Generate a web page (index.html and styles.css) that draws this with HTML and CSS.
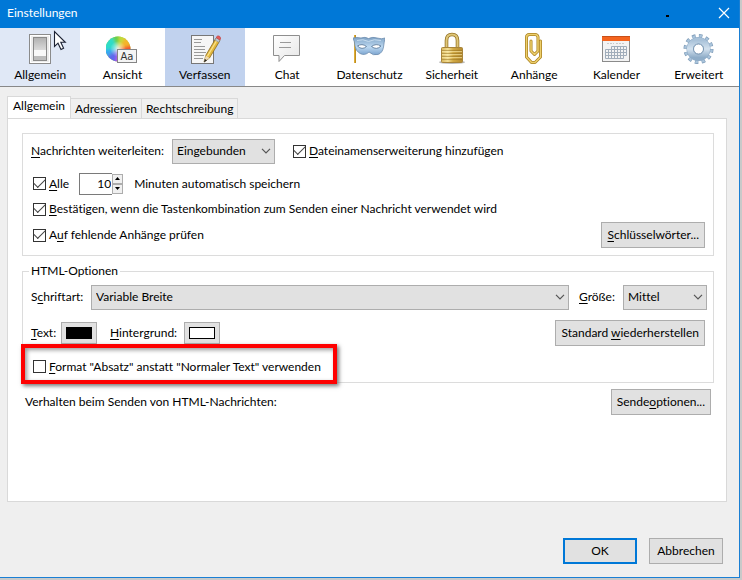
FILE: index.html
```html
<!DOCTYPE html>
<html lang="de">
<head>
<meta charset="utf-8">
<meta name="viewport" content="width=device-width, initial-scale=1">
<title>Einstellungen</title>
<link rel="stylesheet" href="styles.css">
</head>
<body>
<div class="window">
  <header class="titlebar">
    <h1 class="title">Einstellungen</h1>
    <span class="speck"></span>
    <button class="close" type="button" aria-label="Schließen">
      <svg width="12" height="12" viewBox="0 0 12 12"><path d="M1 1L11 11M11 1L1 11" stroke="#fff" stroke-width="1.2"/></svg>
    </button>
  </header>

  <nav class="toolbar">
    <button class="pane hover" type="button">
      <svg class="icon" viewBox="0 0 32 32">
        <defs>
          <linearGradient id="sw" x1="0" y1="0" x2="0" y2="1"><stop offset="0" stop-color="#b0b0b0"/><stop offset=".65" stop-color="#e2e2e2"/><stop offset="1" stop-color="#b4b4b4"/></linearGradient>
        </defs>
        <rect x="5.500" y="2.500" width="21" height="29" fill="#ececec" stroke="#8b8b8b"/>
        <rect x="6.500" y="3.500" width="19" height="27" fill="none" stroke="#fff"/>
        <rect x="9.500" y="5.500" width="13" height="23" fill="url(#sw)" stroke="#8a8a8a"/>
        <rect x="10" y="18" width="12" height="6" fill="#f8f8f8"/>
        <path d="M10 24h12v4H10z" fill="#bcbcbc"/>
      </svg>
      <span>Allgemein</span>
      <svg class="pointer" width="14" height="21" viewBox="0 0 14 21"><path d="M1.500 1.500V16.500L5 13.200L8 19.500L10.600 18.300L7.800 12.300H12.300Z" fill="#fff" stroke="#1c2233" stroke-width="1.100"/></svg>
    </button>
    <button class="pane" type="button">
      <svg class="icon" viewBox="0 0 32 32">
        <defs>
          <radialGradient id="hl"><stop offset="0" stop-color="#fff" stop-opacity=".75"/><stop offset="1" stop-color="#fff" stop-opacity="0"/></radialGradient>
          <filter id="sf" x="-20%" y="-20%" width="140%" height="140%"><feGaussianBlur stdDeviation="1.500"/></filter>
          <clipPath id="disc"><circle cx="12" cy="17" r="12.500"/></clipPath>
        </defs>
        <g clip-path="url(#disc)">
          <rect x="-1" y="4" width="26" height="26" fill="#a6d84a"/>
          <g filter="url(#sf)">
            <path d="M12 17L4 0H15Z" fill="#63cf4b"/>
            <path d="M12 17L13 0H24Z" fill="#c5d93a"/>
            <path d="M12 17L22 2L30 14Z" fill="#f4b42b"/>
            <path d="M12 17L30 12V26Z" fill="#f0512e"/>
            <path d="M12 17L28 24L18 34Z" fill="#ee3f8e"/>
            <path d="M12 17L19 34H8Z" fill="#c94fe6"/>
            <path d="M12 17L9 34L-4 28Z" fill="#5d68ee"/>
            <path d="M12 17L-4 28V16Z" fill="#39a5f3"/>
            <path d="M12 17L-4 18V4H6Z" fill="#2fdcc8"/>
          </g>
          <circle cx="12" cy="17" r="8" fill="url(#hl)"/>
        </g>
        <rect x="11.500" y="17.500" width="19" height="13" fill="#f4f4f4" stroke="#858585"/>
        <text x="21" y="28" class="sample" text-anchor="middle">Aa</text>
      </svg>
      <span>Ansicht</span>
    </button>
    <button class="pane selected" type="button">
      <svg class="icon" viewBox="0 0 32 32">
        <rect x="2.500" y="3.500" width="22" height="28" fill="#f6f6f6" stroke="#777"/>
        <path d="M5 7.500h8M5 10.500h7M5 14.500h11M5 17.500h11M5 20.500h12M5 23.500h10M5 26.500h9" stroke="#999"/>
        <path d="M15 30L17 23L27 6L31 8.500L20.500 26Z" fill="#e3b83c" stroke="#8a681c" stroke-width=".8"/>
        <path d="M18.500 24L28 8" stroke="#fae28a" stroke-width="1.300"/>
        <path d="M15 30L16.800 23.500L20.500 26Z" fill="#eed9af"/>
        <path d="M15 30.500L15.800 27L18 28.300Z" fill="#222"/>
        <path d="M26 8L27.200 5.800L31 8L29.700 10.300Z" fill="#bfc6cf" stroke="#7c848f" stroke-width=".5"/>
        <path d="M27 5.500Q28.500 3 30.500 4.200Q32.500 5.700 31 8Z" fill="#e65a5a" stroke="#b84343" stroke-width=".6"/>
      </svg>
      <span>Verfassen</span>
    </button>
    <button class="pane" type="button">
      <svg class="icon" viewBox="0 0 32 32">
        <defs><linearGradient id="bub" x1="0" y1="0" x2="1" y2="1"><stop offset="0" stop-color="#fff"/><stop offset="1" stop-color="#e6e6e6"/></linearGradient></defs>
        <path d="M2.500 3.500H28.500V23.500H13.500L8 29.500V23.500H2.500Z" fill="url(#bub)" stroke="#8e8e8e"/>
        <path d="M9 10.500h11M8 15.500h12" stroke="#9a9a9a"/>
      </svg>
      <span>Chat</span>
    </button>
    <button class="pane" type="button">
      <svg class="icon" viewBox="0 0 32 32">
        <defs><linearGradient id="mk" x1="0" y1="0" x2="0" y2="1"><stop offset="0" stop-color="#7fa3c6"/><stop offset=".55" stop-color="#bcd8f1"/><stop offset="1" stop-color="#7ba4cf"/></linearGradient></defs>
        <path d="M2 3V31" stroke="#b88718" stroke-width="2"/>
        <path d="M1.700 3V31" stroke="#f0c04b" stroke-width=".8"/>
        <path d="M0 6Q4 5 8 6Q12 4.500 15.500 6.500Q20 4.500 24 6Q29 7.500 32 6Q31 11 30.500 15Q29.500 21 25 22.500Q20 24 16 20Q12 24 7 21.500Q2.500 19 2 14Q1.500 9 0 6Z" fill="url(#mk)" stroke="#6d8daf" stroke-width=".8"/>
        <path d="M4.500 14Q9 11 13.500 14.500Q9 18.500 4.500 14ZM18.500 14.500Q23 11 28 14Q23.500 18.500 18.500 14.500Z" fill="#fff" stroke="#5c7c9c" stroke-width=".9"/>
        <path d="M4 8.500Q10 6.500 15.500 9.500Q21 6.500 28 8.500" fill="none" stroke="#c8ddef"/>
      </svg>
      <span>Datenschutz</span>
    </button>
    <button class="pane" type="button">
      <svg class="icon" viewBox="0 0 32 32">
        <defs>
          <linearGradient id="lk" x1="0" x2="1"><stop offset="0" stop-color="#d8b65c"/><stop offset=".3" stop-color="#f3de94"/><stop offset=".55" stop-color="#d2aa45"/><stop offset="1" stop-color="#b48a30"/></linearGradient>
        </defs>
        <ellipse cx="16" cy="30.300" rx="13" ry="1.700" fill="#bbb"/>
        <path d="M10.500 16V8.500Q10.500 2.500 16 2.500Q21.500 2.500 21.500 8.500V16" fill="none" stroke="#967426" stroke-width="3.600"/>
        <path d="M10.500 16V8.500Q10.500 2.500 16 2.500Q21.500 2.500 21.500 8.500V16" fill="none" stroke="#dfc678" stroke-width="2"/>
        <rect x="5.500" y="15.500" width="21" height="15" rx="1" fill="url(#lk)" stroke="#a8853a"/>
        <path d="M6 18.500h20M6 21.500h20M6 24.500h20M6 27.500h20" stroke="#94701f" stroke-opacity=".5"/>
        <path d="M6 19.500h20M6 22.500h20M6 25.500h20" stroke="#fff0b4" stroke-opacity=".55"/>
      </svg>
      <span>Sicherheit</span>
    </button>
    <button class="pane" type="button">
      <svg class="icon" viewBox="0 0 32 32">
        <path d="M13 9V19L16.500 22.500L20 19V5Q19.500 2.500 17 2.500H11.500Q8.500 2.500 8.500 5.500V25L13.500 30.500H17L22.500 25V9" fill="none" stroke="#a98120" stroke-width="3" stroke-linejoin="round" stroke-linecap="round"/>
        <path d="M13 9V19L16.500 22.500L20 19V5Q19.500 2.500 17 2.500H11.500Q8.500 2.500 8.500 5.500V25L13.500 30.500H17L22.500 25V9" fill="none" stroke="#edcf6c" stroke-width="1.500" stroke-linejoin="round" stroke-linecap="round"/>
      </svg>
      <span>Anhänge</span>
    </button>
    <button class="pane" type="button">
      <svg class="icon" viewBox="0 0 32 32">
        <rect x="2.500" y="4.500" width="27" height="25" fill="#f3f3f3" stroke="#8b8b8b"/>
        <rect x="2" y="4" width="28" height="5" fill="#f4641e"/>
        <path d="M2 4.500h28" stroke="#c84f18"/>
        <path d="M7 11.500h7M16 11.500h9" stroke="#c9c9c9" stroke-dasharray="2 1"/>
        <path d="M11.500 14.500h15v9h-3v3h-18v-9h6zM5.500 20.500h21M5.500 23.500h18M11.500 17.500h15M8.500 17.500v9M11.500 17.500v9M14.500 14.500v12M17.500 14.500v12M20.500 14.500v12M23.500 14.500v9" fill="none" stroke="#a1adba"/>
      </svg>
      <span>Kalender</span>
    </button>
    <button class="pane" type="button">
      <svg class="icon" viewBox="0 0 32 32">
        <defs><linearGradient id="gr" x1="0" y1="0" x2="0" y2="1"><stop offset="0" stop-color="#a9c2d9"/><stop offset=".5" stop-color="#d2e1ee"/><stop offset="1" stop-color="#8fadc8"/></linearGradient></defs>
        <circle cx="15.500" cy="17" r="13" fill="none" stroke="#7f9cb8" stroke-width="4" stroke-dasharray="3.500 3.307"/>
        <circle cx="15.500" cy="17" r="12.800" fill="none" stroke="#a9c4dc" stroke-width="3" stroke-dasharray="2.500 4.202" stroke-dashoffset="-.5"/>
        <circle cx="15.500" cy="17" r="8.500" fill="none" stroke="#8fabc6" stroke-width="7"/>
        <circle cx="15.500" cy="17" r="8.500" fill="none" stroke="url(#gr)" stroke-width="6"/>
        <circle cx="15.500" cy="17" r="5" fill="#fff" stroke="#7795b2"/>
      </svg>
      <span>Erweitert</span>
    </button>
  </nav>

  <main class="content">
    <div class="tabs" role="tablist">
      <button class="tab active" type="button" role="tab" aria-selected="true">Allgemein</button>
      <button class="tab" type="button" role="tab">Adressieren</button>
      <button class="tab" type="button" role="tab">Rechtschreibung</button>
    </div>

    <form class="panel">
      <section class="group general">
        <div class="row forward">
          <label class="forward-label" for="forward"><u>N</u>achrichten weiterleiten:</label>
          <span class="select mode">
            <select id="forward"><option>Eingebunden</option></select>
            <svg width="10" height="6" viewBox="0 0 10 6"><path d="M1 .8L5 4.800L9 .8" fill="none" stroke="#555" stroke-width="1.200"/></svg>
          </span>
          <label class="check"><input type="checkbox" checked><span><u>D</u>ateinamenserweiterung hinzufügen</span></label>
        </div>
        <div class="row autosave">
          <label class="check"><input type="checkbox" checked><span><u>A</u>lle</span></label>
          <span class="spinner">
            <input type="text" value="10" aria-label="Minuten">
            <span class="steps">
              <button type="button" aria-label="Mehr"><svg width="5" height="3" viewBox="0 0 5 3"><path d="M0 3L2.500 0L5 3Z"/></svg></button>
              <button type="button" aria-label="Weniger"><svg width="5" height="3" viewBox="0 0 5 3"><path d="M0 0L2.500 3L5 0Z"/></svg></button>
            </span>
          </span>
          <span>Minuten automatisch speichern</span>
        </div>
        <div class="row confirm">
          <label class="check"><input type="checkbox" checked><span><u>B</u>estätigen, wenn die Tastenkombination zum Senden einer Nachricht verwendet wird</span></label>
        </div>
        <div class="row attach">
          <label class="check"><input type="checkbox" checked><span>A<u>u</u>f fehlende Anhänge prüfen</span></label>
          <button class="button end" type="button"><u>S</u>chlüsselwörter...</button>
        </div>
      </section>

      <fieldset class="group html">
        <legend>HTML-Optionen</legend>
        <div class="row fonts">
          <label class="font-label" for="font">S<u>c</u>hriftart:</label>
          <span class="select font">
            <select id="font"><option>Variable Breite</option></select>
            <svg width="10" height="6" viewBox="0 0 10 6"><path d="M1 .8L5 4.800L9 .8" fill="none" stroke="#555" stroke-width="1.200"/></svg>
          </span>
          <label class="size-label" for="size"><u>G</u>röße:</label>
          <span class="select size">
            <select id="size"><option>Mittel</option></select>
            <svg width="10" height="6" viewBox="0 0 10 6"><path d="M1 .8L5 4.800L9 .8" fill="none" stroke="#555" stroke-width="1.200"/></svg>
          </span>
        </div>
        <div class="row colors">
          <label class="text-label" for="fg"><u>T</u>ext:</label>
          <button class="color" id="fg" type="button"><span class="swatch black"></span></button>
          <label class="back-label" for="bg"><u>H</u>intergrund:</label>
          <button class="color" id="bg" type="button"><span class="swatch white"></span></button>
          <button class="button end" type="button">Standard <u>w</u>iederherstellen</button>
        </div>
        <div class="row format">
          <label class="check marked"><input type="checkbox"><span><u>F</u>ormat "Absatz" anstatt "Normaler Text" verwenden</span></label>
        </div>
      </fieldset>

      <div class="row sending">
        <span>Verhalten beim Senden von HTML-Nachrichten:</span>
        <button class="button end" type="button">Sende<u>o</u>ptionen...</button>
      </div>
    </form>
  </main>

  <footer class="actions">
    <button class="button default" type="button">OK</button>
    <button class="button" type="button">Abbrechen</button>
  </footer>
</div>
</body>
</html>
```
FILE: styles.css
```css
* {
  box-sizing: border-box;
}

body {
  margin: 0;
  padding: 0 2px 2px 0;
  background: #c9c9c9;
  color: #000;
  font: 12px/16px Lato, "Open Sans", sans-serif;
  font-variant-ligatures: none;
}

button, input, select {
  margin: 0;
  font: inherit;
  font-variant-ligatures: none;
  color: inherit;
}

u {
  text-underline-offset: 2px;
}

.window {
  display: flex;
  flex-direction: column;
  min-height: calc(100vh - 2px);
  background: #efefef;
  border: solid #1a7fd4;
  border-width: 0 1px 1px 0;
}

.titlebar {
  display: flex;
  align-items: center;
  height: 28px;
  padding: 0 9px 2px 7px;
  background: #0078d7;
  color: #fff;
}

.title {
  flex: 1;
  margin: 0;
  font-size: 12px;
  font-weight: 400;
}

.speck {
  width: 3px;
  height: 2px;
  margin: 6px 49px 0 0;
  background: #000;
}

.close {
  display: flex;
  padding: 0;
  border: 0;
  background: none;
}

.toolbar {
  display: grid;
  grid-template-columns: repeat(9, 1fr);
  column-gap: 2px;
  background: #fff;
  border-bottom: 1px solid #888;
}

.pane {
  position: relative;
  display: flex;
  flex-direction: column;
  align-items: center;
  gap: 3px;
  height: 58px;
  padding: 4px 0 0;
  border: 0;
  background: none;
}

.pane.hover {
  background: #e0e8f6;
}

.pane.selected {
  background: #c1d2ee;
}

.icon {
  width: 32px;
  height: 32px;
}

.sample {
  font: 10px "DejaVu Sans", sans-serif;
  fill: #333;
}

.pointer {
  position: absolute;
  top: 2px;
  left: 53px;
}

.content {
  flex: 1;
  display: flex;
  flex-direction: column;
  padding: 9px 12px 0 7px;
}

.tabs {
  display: flex;
  align-items: flex-end;
}

.tab {
  height: 20px;
  padding: 0 4px;
  border: 1px solid #d9d9d9;
  border-width: 1px 1px 0 0;
  background: #f0f0f0;
}

.tab.active {
  height: 23px;
  margin-bottom: -1px;
  padding: 0 5px 4px;
  border-left-width: 1px;
  background: #fff;
}

.panel {
  flex: 1;
  padding: 14px 12px 0 14px;
  border: 1px solid #d9d9d9;
  background: #fff;
}

.group {
  margin: 0;
  border: 1px solid #dcdcdc;
}

.row {
  display: flex;
  align-items: center;
}

.general {
  padding: 4px 8px 0;
}

.forward {
  height: 26px;
}

.forward-label {
  width: 141px;
}

.forward .check {
  margin-left: 18px;
}

.autosave {
  height: 39px;
}

.confirm {
  height: 12px;
}

.attach {
  height: 40px;
}

.check {
  display: flex;
  align-items: center;
  gap: 3px;
  margin-left: 2px;
}

.check input {
  display: grid;
  place-items: center;
  width: 13px;
  height: 13px;
  appearance: none;
  border: 1px solid #333;
  background: #fff;
}

.check input:checked::before {
  content: "";
  width: 10px;
  height: 5px;
  border: solid #444;
  border-width: 0 0 1px 1px;
  transform: translate(0, -2px) rotate(-45deg);
}

.select {
  position: relative;
  display: flex;
  height: 25px;
}

.select select {
  width: 100%;
  padding: 0 16px 0 4px;
  appearance: none;
  border: 1px solid #adadad;
  border-radius: 0;
  background: #e1e1e1;
}

.select svg {
  position: absolute;
  top: 9px;
  right: 4px;
  pointer-events: none;
}

.mode {
  width: 103px;
}

.spinner {
  display: flex;
  align-items: center;
  margin: 0 11px 0 10px;
}

.spinner input {
  width: 33px;
  height: 22px;
  padding: 0 1px;
  border: 1px solid #7a7a7a;
  border-right: 0;
  background: #fff;
  text-align: right;
}

.steps {
  display: flex;
  flex-direction: column;
}

.steps button {
  display: grid;
  place-items: center;
  width: 11px;
  height: 10px;
  padding: 0;
  border: 1px solid #adadad;
  background: #f0f0f0;
}

.button {
  height: 26px;
  padding: 0 5px;
  border: 1px solid #adadad;
  background: #e1e1e1;
  white-space: nowrap;
}

.end {
  margin-left: auto;
}

.html {
  margin-top: 7px;
  padding: 0 6px 0 8px;
}

.html legend {
  margin-left: -2px;
  padding: 0 2px;
}

.fonts {
  height: 36px;
}

.font-label {
  width: 60px;
}

.font {
  flex: 1;
}

.size-label {
  width: 54px;
  padding-left: 10px;
}

.size {
  width: 84px;
}

.colors {
  height: 36px;
  padding-right: 2px;
}

.text-label {
  width: 30px;
}

.color {
  width: 36px;
  height: 22px;
  padding: 4px;
  border: 1px solid #adadad;
  background: #e1e1e1;
}

.back-label {
  width: 87px;
  padding-left: 13px;
}

.swatch {
  display: block;
  height: 12px;
  border: 1px solid #000;
}

.swatch.black {
  background: #000;
}

.swatch.white {
  background: #fff;
}

.format {
  height: 31px;
}

.marked {
  position: relative;
}

.marked::after {
  content: "";
  position: absolute;
  inset: -15px -16px -9px -12px;
  border: 4px solid #fe0000;
  box-shadow: 2px 2px 4px #777, inset 2px 2px 4px #999;
  pointer-events: none;
}

.sending {
  height: 38px;
  padding: 0 3px;
}

.actions {
  display: flex;
  justify-content: flex-end;
  gap: 12px;
  padding: 36px 16px 13px;
}

.actions .button {
  min-width: 74px;
}

.actions .default {
  border: 2px solid #0078d7;
}
```
